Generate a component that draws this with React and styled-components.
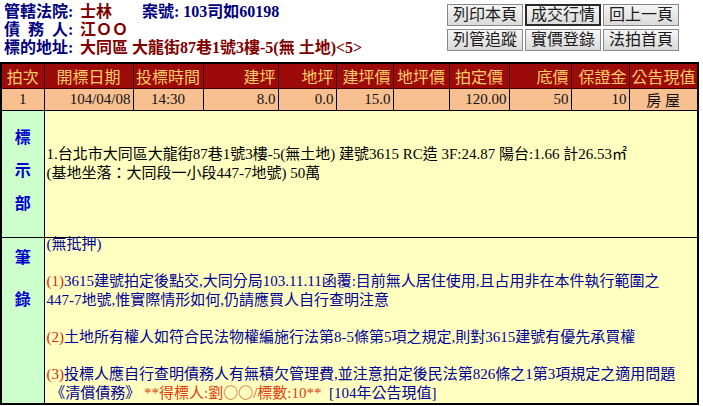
import React from 'react';
import styled, { createGlobalStyle } from 'styled-components';

const columns = [
  { key: 'round', title: '拍次', width: 43, head: 'center', cell: 'center' },
  { key: 'date', title: '開標日期', width: 89, head: 'center', cell: 'right' },
  { key: 'time', title: '投標時間', width: 70, head: 'center', cell: 'center' },
  { key: 'bArea', title: '建坪', width: 75, head: 'right', cell: 'right' },
  { key: 'lArea', title: '地坪', width: 58, head: 'right', cell: 'right' },
  { key: 'bPrice', title: '建坪價', width: 57, head: 'right', cell: 'right' },
  { key: 'lPrice', title: '地坪價', width: 56, head: 'center', cell: 'right' },
  { key: 'sold', title: '拍定價', width: 60, head: 'center', cell: 'right' },
  { key: 'floor', title: '底價', width: 62, head: 'right', cell: 'right' },
  { key: 'deposit', title: '保證金', width: 58, head: 'right', cell: 'right' },
  { key: 'value', title: '公告現值', width: 69, head: 'center', cell: 'center' },
];

const auction = {
  round: '1',
  date: '104/04/08',
  time: '14:30',
  bArea: '8.0',
  lArea: '0.0',
  bPrice: '15.0',
  lPrice: '',
  sold: '120.00',
  floor: '50',
  deposit: '10',
  value: '房 屋',
};

const buttons = [
  { label: '列印本頁' },
  { label: '成交行情', active: true },
  { label: '回上一頁' },
  { label: '列管追蹤' },
  { label: '實價登錄' },
  { label: '法拍首頁' },
];

const notes = [
  {
    num: '(1)',
    lines: [
      '3615建號拍定後點交,大同分局103.11.11函覆:目前無人居住使用,且占用非在本件執行範圍之',
      '447-7地號,惟實際情形如何,仍請應買人自行查明注意',
    ],
  },
  {
    num: '(2)',
    lines: ['土地所有權人如符合民法物權編施行法第8-5條第5項之規定,則對3615建號有優先承買權'],
  },
];

const App = () => {
  return (
    <>
      <GlobalStyle />
      <Header>
        <InfoBlock>
          <InfoLine>
            <InfoLabel>管轄法院:</InfoLabel>
            <InfoValue>士林</InfoValue>
            <CaseNo>
              案號: <span>103司如60198</span>
            </CaseNo>
          </InfoLine>
          <InfoLine>
            <InfoLabel>債  務  人:</InfoLabel>
            <InfoValue>江ＯＯ</InfoValue>
          </InfoLine>
          <InfoLine>
            <InfoLabel>標的地址:</InfoLabel>
            <InfoValue>大同區 大龍街87巷1號3樓-5(無 土地)&lt;5&gt;</InfoValue>
          </InfoLine>
        </InfoBlock>
        <ButtonGrid>
          {buttons.map((b) => (
            <NavButton key={b.label} $active={b.active}>
              {b.label}
            </NavButton>
          ))}
        </ButtonGrid>
      </Header>

      <Table>
        <colgroup>
          {columns.map((c) => (
            <col key={c.key} style={{ width: c.width }} />
          ))}
        </colgroup>
        <tbody>
          <tr>
            {columns.map((c) => (
              <HeadCell key={c.key} $align={c.head}>
                {c.title}
              </HeadCell>
            ))}
          </tr>
          <tr>
            {columns.map((c) => (
              <DataCell key={c.key} $align={c.cell}>
                {auction[c.key]}
              </DataCell>
            ))}
          </tr>
          <tr>
            <SideCell $height={126} $top={18}>
              <SideChars $gap={16}>
                <span>標</span>
                <span>示</span>
                <span>部</span>
              </SideChars>
            </SideCell>
            <ContentCell colSpan={10}>
              <Description>
                <div>1.台北市大同區大龍街87巷1號3樓-5(無土地) 建號3615 RC造 3F:24.87 陽台:1.66 計26.53㎡</div>
                <div>(基地坐落：大同段一小段447-7地號) 50萬</div>
              </Description>
            </ContentCell>
          </tr>
          <tr>
            <SideCell $height={163} $top={11}>
              <SideChars $gap={25}>
                <span>筆</span>
                <span>錄</span>
              </SideChars>
            </SideCell>
            <ContentCell colSpan={10}>
              <Notes>
                <NoteBlock>(無抵押)</NoteBlock>
                {notes.map((n) => (
                  <NoteBlock key={n.num}>
                    {n.lines.map((line, i) => (
                      <div key={i}>
                        {i === 0 && <NoteNum>{n.num}</NoteNum>}
                        {line}
                      </div>
                    ))}
                  </NoteBlock>
                ))}
                <div>
                  <NoteNum>(3)</NoteNum>投標人應自行查明債務人有無積欠管理費,並注意拍定後民法第826條之1第3項規定之適用問題
                </div>
                <div>
                  {' 《清償債務》 '}
                  <Winner>
                    **得標人:劉<Wide>○○</Wide>/標數:10**
                  </Winner>
                  {'  [104年公告現值]'}
                </div>
              </Notes>
            </ContentCell>
          </tr>
        </tbody>
      </Table>
    </>
  );
};

const GlobalStyle = createGlobalStyle`
  html, body {
    margin: 0;
    padding: 0;
    background: #fff;
    overflow: hidden;
  }
  body {
    font-family: "Liberation Serif", "Noto Sans CJK TC", serif;
  }
`;

const Header = styled.div`
  display: flex;
  justify-content: space-between;
  align-items: flex-start;
  height: 62px;
  padding: 3px 24px 0 4px;
  box-sizing: border-box;
`;

const InfoBlock = styled.div`
  display: flex;
  flex-direction: column;
`;

const InfoLine = styled.div`
  display: flex;
  align-items: baseline;
  height: 18px;
  line-height: 18px;
  font-size: 16px;
  font-weight: bold;
  white-space: pre;
`;

const InfoLabel = styled.span`
  display: inline-block;
  width: 76px;
  color: #000080;
`;

const InfoValue = styled.span`
  color: #800000;
`;

const CaseNo = styled.span`
  margin-left: 30px;
  color: #000080;
`;

const ButtonGrid = styled.div`
  display: grid;
  grid-template-columns: repeat(3, 76px);
  grid-auto-rows: 22px;
  column-gap: 2px;
  row-gap: 3px;
  margin-top: 1px;
`;

const NavButton = styled.button`
  box-sizing: border-box;
  margin: 0;
  padding: 0;
  font-family: "Liberation Serif", "Noto Sans CJK TC", serif;
  font-size: 16px;
  line-height: 18px;
  color: #1a1a1a;
  background: linear-gradient(#f6f6f6, #dadada);
  border: ${(p) => (p.$active ? '2px solid #2a2a2a' : '1px solid #8a8a8a')};
  cursor: pointer;
`;

const Table = styled.table`
  width: 699px;
  border-collapse: collapse;
  table-layout: fixed;
  border: 2px solid #000;
  font-size: 15px;
`;

const HeadCell = styled.td`
  height: 24px;
  padding: 0 2px;
  background: #9c0a0a;
  color: #ffcc66;
  font-size: 16px;
  text-align: ${(p) => p.$align};
  border: 1px solid #3a0000;
  white-space: nowrap;
  overflow: hidden;
`;

const DataCell = styled.td`
  height: 20px;
  padding: 0 2px;
  background: #f8c090;
  color: #111;
  text-align: ${(p) => p.$align};
  border: 1px solid #000;
  white-space: nowrap;
`;

const SideCell = styled.td`
  height: ${(p) => p.$height - p.$top}px;
  padding: ${(p) => p.$top}px 0 0;
  vertical-align: top;
  background: #ccffcc;
  border: 1px solid #000;
`;

const SideChars = styled.div`
  display: flex;
  flex-direction: column;
  align-items: center;
  gap: ${(p) => p.$gap}px;
  color: #0000cc;
  font-size: 16px;
  font-weight: bold;
  line-height: 17px;
`;

const ContentCell = styled.td`
  padding: 0 0 0 2px;
  vertical-align: top;
  background: #ffffc0;
  border: 1px solid #000;
`;

const Description = styled.div`
  padding-top: 34px;
  line-height: 19px;
  color: #000;
  white-space: nowrap;
`;

const Notes = styled.div`
  margin-top: -3px;
  line-height: 18.5px;
  color: #000099;
  white-space: pre;
`;

const NoteBlock = styled.div`
  margin-bottom: 18.5px;
`;

const NoteNum = styled.span`
  color: #d02a10;
`;

const Winner = styled.span`
  color: #e04010;
`;

const Wide = styled.span`
  font-family: "Noto Sans CJK TC", sans-serif;
`;

export default App;
